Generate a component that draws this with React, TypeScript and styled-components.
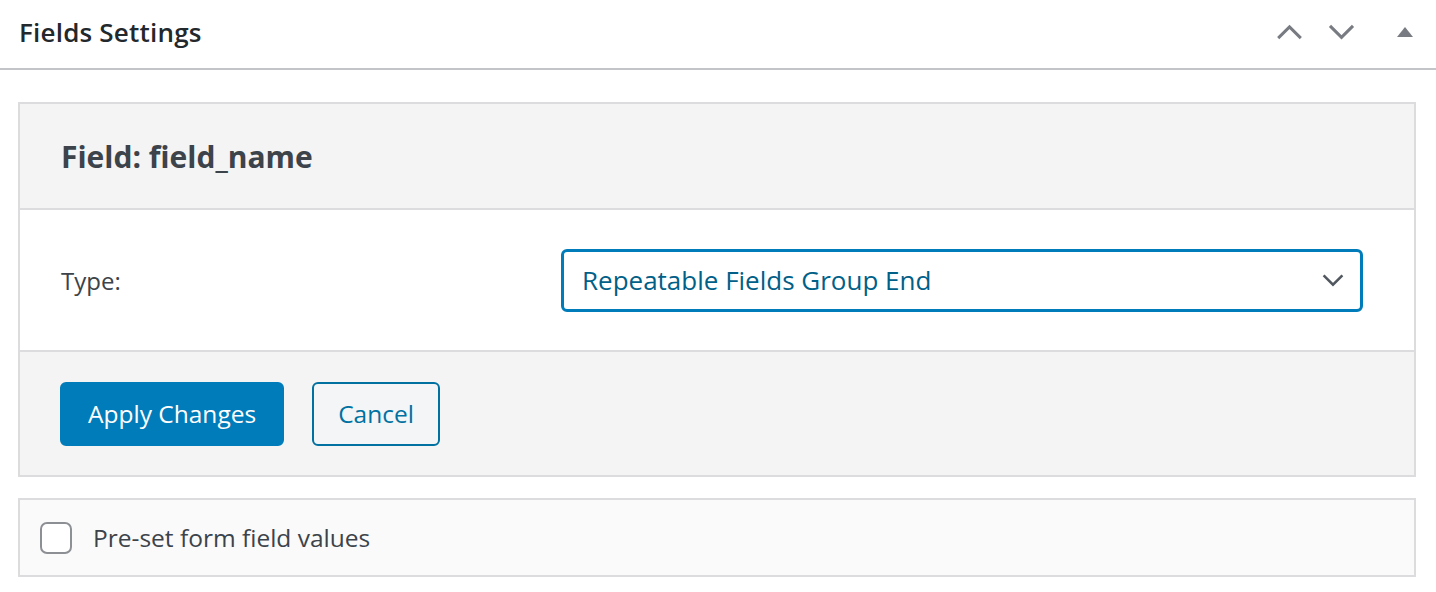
import React, { FC } from 'react';
import styled, { createGlobalStyle } from 'styled-components';

const GlobalStyle = createGlobalStyle`
  html, body {
    margin: 0;
    padding: 0;
    background: #fff;
  }

  body {
    font-family: 'Open Sans', 'Noto Sans', sans-serif;
    color: #1d2327;
  }
`;

const Postbox = styled.div`
  width: 1436px;
  background: #fff;
`;

const PostboxHeader = styled.div`
  display: flex;
  align-items: center;
  justify-content: space-between;
  box-sizing: border-box;
  height: 70px;
  padding: 0 23px 4px 19px;
  border-bottom: 2px solid #c3c4c7;
`;

const PostboxTitle = styled.h2`
  margin: 0;
  font-size: 26px;
  font-weight: 600;
  color: #23282d;
  letter-spacing: 0.2px;
`;

const HandleActions = styled.div`
  display: flex;
  align-items: center;
  gap: 25px;
`;

const HandleButton = styled.button<{ $width: number; $offset?: number }>`
  display: flex;
  align-items: center;
  justify-content: center;
  width: ${({ $width }) => $width}px;
  height: 36px;
  margin-left: ${({ $offset = 0 }) => $offset}px;
  padding: 0;
  border: 0;
  background: none;
  color: #787c82;
  cursor: pointer;
`;

const Inside = styled.div`
  display: flex;
  flex-direction: column;
  gap: 21px;
  padding: 32px 20px 0 18px;
`;

const FieldBox = styled.div`
  border: 2px solid #dcdcde;
`;

const FieldHeader = styled.div`
  display: flex;
  align-items: center;
  height: 104px;
  padding: 0 41px;
  background: #f4f4f4;
  border-bottom: 2px solid #dcdcde;
`;

const FieldTitle = styled.h3`
  margin: 0;
  font-size: 30px;
  font-weight: 700;
  color: #3c434a;
`;

const FieldRow = styled.div`
  display: grid;
  grid-template-columns: 500px 1fr;
  align-items: center;
  height: 140px;
  padding: 0 51px 0 41px;
  background: #fff;
  border-bottom: 2px solid #dcdcde;
`;

const Label = styled.label`
  font-size: 24px;
  color: #3c434a;
`;

const Select = styled.div`
  display: flex;
  align-items: center;
  justify-content: space-between;
  box-sizing: border-box;
  height: 63px;
  padding: 0 16px 0 18px;
  border: 3px solid #007cba;
  border-radius: 6px;
  font-size: 26px;
  color: #016087;
  background: #fff;
`;

const FieldFooter = styled.div`
  display: flex;
  align-items: center;
  gap: 28px;
  height: 123px;
  padding: 0 40px;
  background: #f4f4f4;
`;

const Button = styled.button<{ $primary?: boolean }>`
  box-sizing: border-box;
  height: 64px;
  padding: 0 ${({ $primary }) => ($primary ? 26 : 24)}px;
  border: 2px solid ${({ $primary }) => ($primary ? '#007cba' : '#0071a1')};
  border-radius: 6px;
  background: ${({ $primary }) => ($primary ? '#007cba' : '#f3f5f6')};
  color: ${({ $primary }) => ($primary ? '#fff' : '#0071a1')};
  font-family: inherit;
  font-size: 24.5px;
  cursor: pointer;
`;

const OptionBox = styled.label`
  display: flex;
  align-items: center;
  gap: 21px;
  height: 75px;
  padding: 0 20px;
  border: 2px solid #dcdcde;
  background: #fafafa;
  font-size: 24.5px;
  color: #3c434a;
`;

const Checkbox = styled.span`
  box-sizing: border-box;
  width: 32px;
  height: 32px;
  border: 2px solid #8c8f94;
  border-radius: 7px;
  background: #fff;
`;

const ChevronUp: FC = () => (
  <svg width="27" height="17" viewBox="0 0 28 18" fill="none">
    <path d="M2 15 L14 3 L26 15" stroke="currentColor" strokeWidth="3.2" />
  </svg>
);

const ChevronDown: FC<{ size?: number; color?: string }> = ({ size = 27, color = 'currentColor' }) => (
  <svg width={size} height={size * 0.64} viewBox="0 0 28 18" fill="none">
    <path d="M2 3 L14 15 L26 3" stroke={color} strokeWidth="3.2" />
  </svg>
);

const Triangle: FC = () => (
  <svg width="16" height="10" viewBox="0 0 16 10">
    <path d="M8 0 L16 10 L0 10 Z" fill="currentColor" />
  </svg>
);

const App: FC = () => (
  <>
    <GlobalStyle />
    <Postbox>
      <PostboxHeader>
        <PostboxTitle>Fields Settings</PostboxTitle>
        <HandleActions>
          <HandleButton $width={27} aria-label="Move up">
            <ChevronUp />
          </HandleButton>
          <HandleButton $width={27} aria-label="Move down">
            <ChevronDown />
          </HandleButton>
          <HandleButton $width={16} $offset={17} aria-label="Toggle panel">
            <Triangle />
          </HandleButton>
        </HandleActions>
      </PostboxHeader>
      <Inside>
        <FieldBox>
          <FieldHeader>
            <FieldTitle>Field: field_name</FieldTitle>
          </FieldHeader>
          <FieldRow>
            <Label>Type:</Label>
            <Select>
              <span>Repeatable Fields Group End</span>
              <ChevronDown size={22} color="#50575e" />
            </Select>
          </FieldRow>
          <FieldFooter>
            <Button $primary>Apply Changes</Button>
            <Button>Cancel</Button>
          </FieldFooter>
        </FieldBox>
        <OptionBox>
          <Checkbox />
          Pre-set form field values
        </OptionBox>
      </Inside>
    </Postbox>
  </>
);

export default App;
